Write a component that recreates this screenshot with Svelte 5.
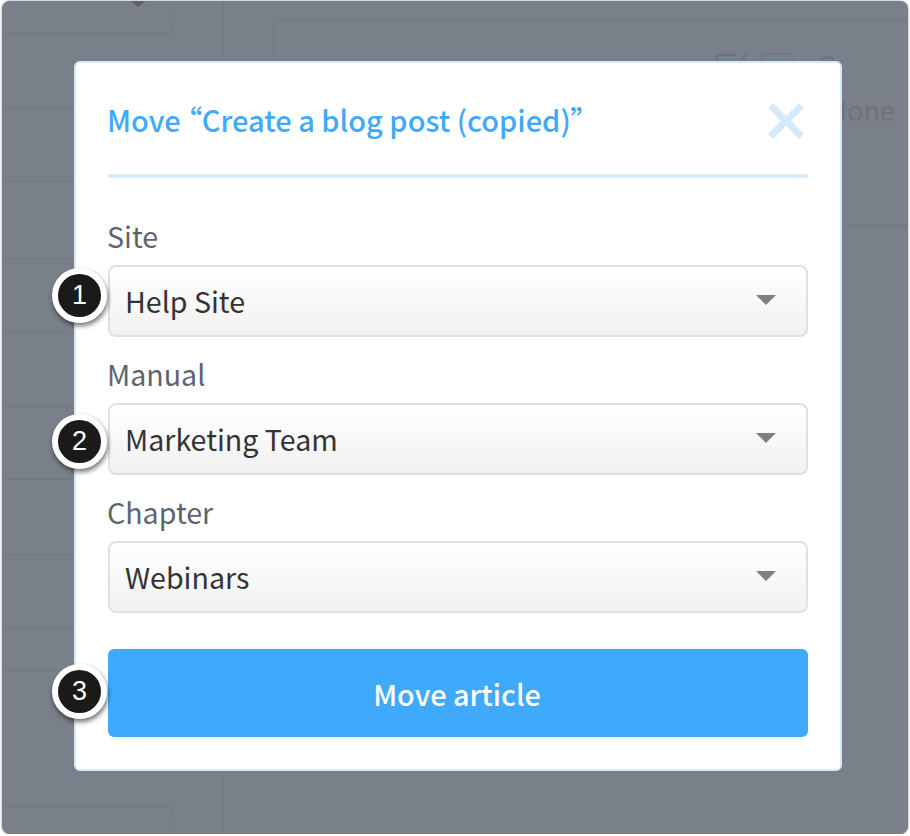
<script>
  // select fields of the move dialog, badge = numbered callout on the screenshot
  // shift = how far the callout sits off the field's centre
  const fields = [
    { label: 'Site', value: 'Help Site', badge: 1, shift: -5 },
    { label: 'Manual', value: 'Marketing Team', badge: 2, shift: 3 },
    { label: 'Chapter', value: 'Webinars' }
  ];

  // divider lines of the dimmed list behind the dialog
  const rowHeights = [75, 73, 77, 74, 74, 73, 75, 74, 42];
</script>

<div class="window">
  <div class="sidebar">
    <div class="top-box"><span class="caret"></span></div>
    {#each rowHeights as h}
      <div class="row" style="height: {h}px"></div>
    {/each}
    <div class="bottom-box"></div>
  </div>

  <div class="main">
    <div class="panel">
      <div class="toolbar">
        <span class="faint">Published by the editor team</span>
        <svg class="tool-edit" width="32" height="22" viewBox="0 0 32 22" aria-hidden="true">
          <path d="M20 2 H1 V22 M24 9 L31 1" fill="none" stroke="#6d727c" stroke-width="2" />
        </svg>
        <span class="tool-box"></span>
        <span class="tool-circle"></span>
      </div>
      <div class="none">None</div>
    </div>
  </div>

  <div class="overlay">
    <div class="modal">
      <header class="head">
        <h1>Move “Create a blog post (copied)”</h1>
        <svg class="close" width="36" height="36" viewBox="0 0 36 36" aria-hidden="true">
          <path d="M2.5 2.5 L33.5 33.5 M33.5 2.5 L2.5 33.5" fill="none" stroke="#d4e9fa" stroke-width="7" />
        </svg>
      </header>

      {#each fields as f}
        <div class="label">{f.label}</div>
        <div class="select">
          {#if f.badge}<span class="badge" style="margin-top: {f.shift - 28}px">{f.badge}</span>{/if}
          <span class="value">{f.value}</span>
          <svg width="20" height="10" viewBox="0 0 20 10" aria-hidden="true">
            <path d="M0 0 H20 L10 10 Z" fill="#808080" />
          </svg>
        </div>
      {/each}

      <button class="submit">
        <span class="badge">3</span>
        Move article
      </button>
    </div>
  </div>
</div>

<style>
  :global(body) {
    background: #fff;
  }

  .window {
    position: relative;
    box-sizing: border-box;
    display: flex;
    width: 906px;
    height: 833px;
    margin: 1px 0 0 2px;
    overflow: hidden;
    background: #7a8089;
    border-radius: 8px;
    box-shadow: 0 0 2px rgba(0, 0, 0, 0.55);
    font-family: "Noto Sans CJK SC", "Noto Sans", sans-serif;
    font-feature-settings: "palt";
  }

  .sidebar {
    display: flex;
    flex-direction: column;
    flex: none;
    width: 221px;
    border-right: 1px solid #727884;
  }

  .top-box {
    position: relative;
    box-sizing: border-box;
    flex: none;
    width: 172px;
    height: 33px;
    border: 1px solid #727884;
    border-width: 0 1px 1px 0;
    border-radius: 0 0 6px 0;
  }

  .caret {
    position: absolute;
    top: 0;
    left: 129px;
    border: 7px solid transparent;
    border-top: 6px solid #5a5e66;
    border-bottom: 0;
  }

  .row {
    box-sizing: border-box;
    flex: none;
    border-bottom: 1px solid #727884;
  }

  .bottom-box {
    box-sizing: border-box;
    flex: none;
    width: 172px;
    height: 40px;
    margin-top: 135px;
    border: 1px solid #727884;
    border-width: 1px 1px 0 0;
    border-radius: 0 6px 0 0;
  }

  .main {
    flex: 1;
    padding: 19px 0 0 49px;
  }

  .panel {
    box-sizing: border-box;
    height: 206px;
    border: 1px solid #727884;
    border-width: 1px 0 1px 1px;
    border-radius: 6px 0 0 0;
  }

  .toolbar {
    display: flex;
    align-items: flex-start;
    justify-content: flex-end;
    height: 40px;
    padding: 32px 72px 0 0;
    color: #6d727c;
  }

  .faint {
    margin: 3px 10px 0 0;
    font-size: 24px;
    line-height: 30px;
  }

  .tool-edit {
    display: block;
    margin-right: 13px;
  }

  .tool-box {
    box-sizing: border-box;
    width: 33px;
    height: 20px;
    border: 1px solid #6d727c;
    border-radius: 5px;
  }

  .tool-circle {
    box-sizing: border-box;
    width: 17px;
    height: 17px;
    margin: 3px 0 0 25px;
    border: 2px solid #6d727c;
    border-radius: 50%;
  }

  .none {
    margin-top: -3px;
    padding-right: 13px;
    color: #6d727c;
    font-size: 27px;
    line-height: 40px;
    text-align: right;
  }

  .overlay {
    position: absolute;
    inset: 0;
    padding: 60px 0 0 72px;
  }

  .modal {
    box-sizing: border-box;
    width: 768px;
    height: 710px;
    padding: 0 32px;
    background: #fff;
    border: 2px solid #d4e9fa;
    border-radius: 6px;
  }

  .head {
    display: flex;
    align-items: center;
    justify-content: space-between;
    box-sizing: border-box;
    height: 115px;
    border-bottom: 4px solid #d4e9fa;
  }

  h1 {
    margin: 0 0 0 -1px;
    color: #3fa9fc;
    font-size: 29px;
    font-weight: 500;
    line-height: 40px;
  }

  .close {
    display: block;
    margin: 4px 4px 0 0;
  }

  .label {
    height: 40px;
    margin: 38px 0 9px -1px;
    color: #5c6470;
    font-size: 28.6px;
    line-height: 40px;
  }

  .select + .label {
    margin-top: 17px;
  }

  .select {
    position: relative;
    display: flex;
    align-items: center;
    justify-content: space-between;
    box-sizing: border-box;
    height: 72px;
    padding: 0 30px 2px 15px;
    color: #333;
    font-size: 28.6px;
    background: linear-gradient(#fff, #f1f1f1);
    border: 2px solid #e0e0e0;
    border-radius: 8px;
  }

  .submit {
    position: relative;
    display: block;
    width: 100%;
    height: 88px;
    margin-top: 36px;
    padding: 0 2px 0 0;
    color: #fff;
    font: 500 28.8px "Noto Sans CJK SC", "Noto Sans", sans-serif;
    font-feature-settings: "palt";
    background: #3fa9fc;
    border: 0;
    border-radius: 6px;
  }

  .badge {
    position: absolute;
    top: 50%;
    left: -58px;
    box-sizing: border-box;
    display: flex;
    align-items: center;
    justify-content: center;
    width: 55px;
    height: 55px;
    margin-top: -29px;
    color: #fff;
    font: 400 27px "Liberation Sans", Arial, sans-serif;
    background: #1a1a1a;
    border: 6px solid #fff;
    border-radius: 50%;
    box-shadow: 1px 3px 5px rgba(0, 0, 0, 0.55);
  }

  .submit .badge {
    left: -56px;
  }
</style>
